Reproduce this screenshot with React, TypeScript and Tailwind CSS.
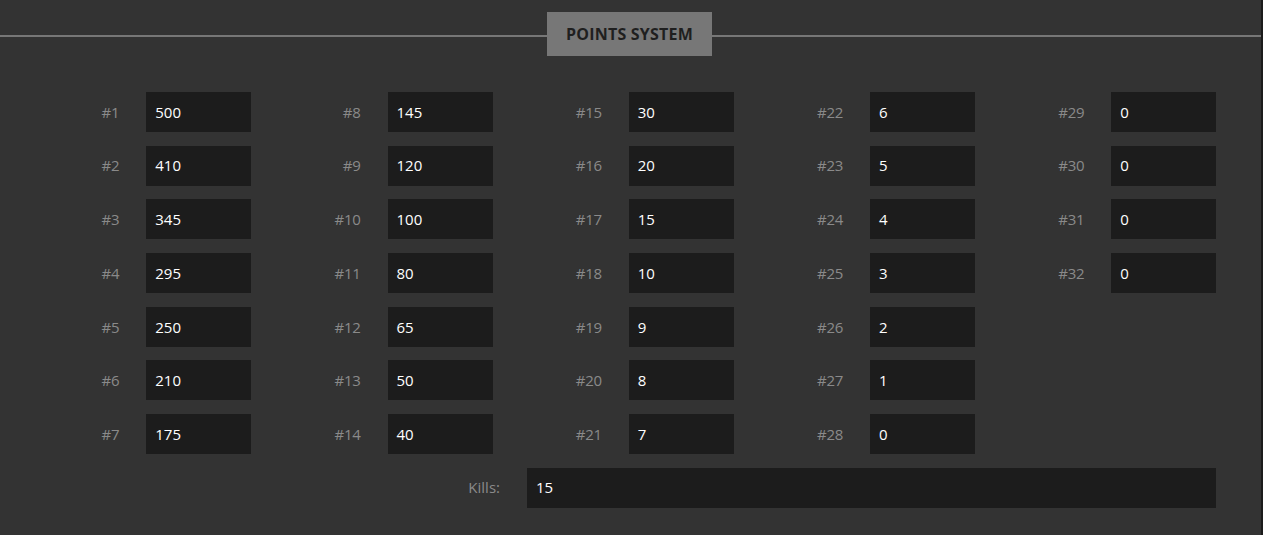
import React from 'react';

const points = [500, 410, 345, 295, 250, 210, 175, 145, 120, 100, 80, 65, 50, 40, 30, 20, 15, 10, 9, 8, 7, 6, 5, 4, 3, 2, 1, 0, 0, 0, 0, 0];

// positions are filled column by column, 7 rows per column
const cells = Array.from({ length: 35 }, (_, i) => {
    const row = Math.floor(i / 5);
    const col = i % 5;
    const idx = col * 7 + row;
    return idx < points.length ? idx : null;
});

const PointField: React.FC<{ label: string; value: number | string }> = ({ label, value }) => (
    <div className="flex items-center justify-end pr-[15px]">
        <span className="flex-1 text-right pr-[27px] text-[15px] text-[#8a8a8a] tracking-[-0.3px]">{label}</span>
        <div className="w-[105px] h-[40px] bg-[#1c1c1c] flex items-center pl-[9px] text-[15px] text-white">{value}</div>
    </div>
);

export default function App() {
    return (
        <div
            className="min-h-[535px] w-full bg-[#333333] border-r-2 border-[#1b1b1b]"
            style={{ fontFamily: '"Open Sans", "DejaVu Sans", sans-serif' }}
        >
            <div className="relative pt-[12px] flex justify-center">
                <div className="absolute left-0 right-0 top-[35px] h-[2px] bg-[#777777]" />
                <div className="relative w-[165px] h-[44px] bg-[#777777] flex items-center justify-center ml-[-2px]">
                    <h2 className="text-[16px] font-bold text-[#1f1f1f] uppercase tracking-[0.2px]">Points System</h2>
                </div>
            </div>

            <div className="ml-[25px] mt-[36px] grid grid-cols-[repeat(5,241.25px)] gap-y-[13.7px]">
                {cells.map((idx, i) =>
                    idx === null ? (
                        <div key={i} />
                    ) : (
                        <PointField key={i} label={`#${idx + 1}`} value={points[idx]} />
                    )
                )}
            </div>

            <div className="flex items-center mt-[13.5px]">
                <span className="w-[500px] text-right text-[15px] text-[#8a8a8a]">Kills:</span>
                <div className="ml-[27px] w-[689px] h-[40px] bg-[#1c1c1c] flex items-center pl-[9px] text-[15px] text-white">15</div>
            </div>
        </div>
    );
}
